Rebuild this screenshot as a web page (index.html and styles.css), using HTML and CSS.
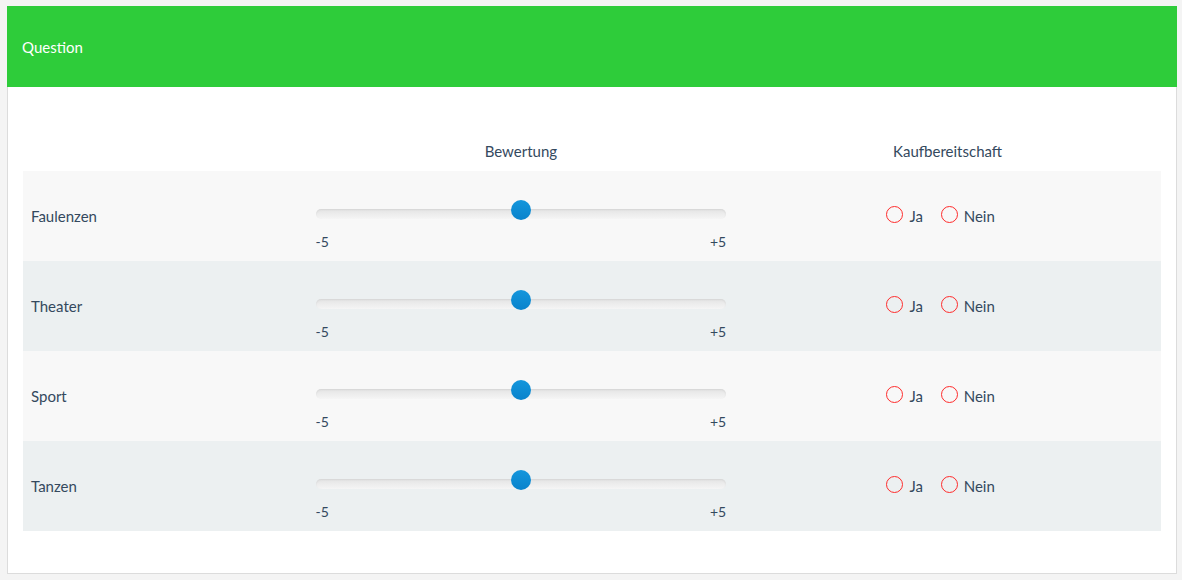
FILE: index.html
```html
<!DOCTYPE html>
<html lang="de">
<head>
    <meta charset="UTF-8">
    <meta name="viewport" content="width=device-width, initial-scale=1.0">
    <title>Question</title>
    <link rel="stylesheet" href="styles.css">
</head>
<body>
    <div class="panel">
        <div class="panel-heading">Question</div>
        <div class="panel-body">
            <table class="matrix">
                <thead>
                    <tr>
                        <th class="col-label"></th>
                        <th class="col-rating">Bewertung</th>
                        <th class="col-buy">Kaufbereitschaft</th>
                    </tr>
                </thead>
                <tbody>
                    <tr>
                        <td class="item">Faulenzen</td>
                        <td class="rating">
                            <div class="slider"><div class="slider-track"></div><div class="slider-thumb"></div></div>
                            <div class="slider-labels"><span>-5</span><span>+5</span></div>
                        </td>
                        <td class="buy">
                            <label class="radio"><input type="radio" name="q1"> Ja</label>
                            <label class="radio"><input type="radio" name="q1"> Nein</label>
                        </td>
                    </tr>
                    <tr>
                        <td class="item">Theater</td>
                        <td class="rating">
                            <div class="slider"><div class="slider-track"></div><div class="slider-thumb"></div></div>
                            <div class="slider-labels"><span>-5</span><span>+5</span></div>
                        </td>
                        <td class="buy">
                            <label class="radio"><input type="radio" name="q2"> Ja</label>
                            <label class="radio"><input type="radio" name="q2"> Nein</label>
                        </td>
                    </tr>
                    <tr>
                        <td class="item">Sport</td>
                        <td class="rating">
                            <div class="slider"><div class="slider-track"></div><div class="slider-thumb"></div></div>
                            <div class="slider-labels"><span>-5</span><span>+5</span></div>
                        </td>
                        <td class="buy">
                            <label class="radio"><input type="radio" name="q3"> Ja</label>
                            <label class="radio"><input type="radio" name="q3"> Nein</label>
                        </td>
                    </tr>
                    <tr>
                        <td class="item">Tanzen</td>
                        <td class="rating">
                            <div class="slider"><div class="slider-track"></div><div class="slider-thumb"></div></div>
                            <div class="slider-labels"><span>-5</span><span>+5</span></div>
                        </td>
                        <td class="buy">
                            <label class="radio"><input type="radio" name="q4"> Ja</label>
                            <label class="radio"><input type="radio" name="q4"> Nein</label>
                        </td>
                    </tr>
                </tbody>
            </table>
        </div>
    </div>
</body>
</html>
```

FILE: styles.css
```css
body{
    background-color: #f4f4f4;
    color: #34495e;
    font-family: Lato, "Open Sans", sans-serif;
    font-size: 15px;
    margin: 0;
    padding: 6px 5px 6px 7px;
}
.panel{
    background-color: #fff;
    border: 1px solid #dcdcdc;
    border-top: none;
}
.panel-heading{
    background-color: #2ecc3a;
    color: #fff;
    height: 81px;
    display: flex;
    align-items: center;
    padding-left: 15px;
    margin-left: -1px;
    margin-right: -1px;
}
.panel-body{
    padding: 44px 15px 42px 15px;
}
.matrix{
    width: 100%;
    border-collapse: collapse;
    table-layout: fixed;
}
.matrix th{
    font-weight: normal;
    height: 40px;
    text-align: center;
    vertical-align: middle;
    padding: 0;
}
.col-label{
    width: 25%;
}
.col-rating, .col-buy{
    width: 37.5%;
}
.matrix tbody tr{
    height: 90px;
    background-color: #f8f8f8;
}
.matrix tbody tr:nth-child(even){
    background-color: #ecf0f1;
}
.item{
    padding: 0 8px;
    vertical-align: middle;
}
.rating{
    vertical-align: top;
    padding: 38px 8px 0 8px;
}
.slider{
    position: relative;
    height: 10px;
}
.slider-track{
    height: 10px;
    border-radius: 5px;
    background: linear-gradient(#e4e4e4, #f5f5f5);
    box-shadow: inset 0 1px 2px rgba(0, 0, 0, 0.07);
}
.slider-thumb{
    position: absolute;
    left: 50%;
    top: -9px;
    width: 20px;
    height: 20px;
    margin-left: -10px;
    border-radius: 50%;
    background: linear-gradient(#1496dc, #0a83cc);
}
.slider-labels{
    display: flex;
    justify-content: space-between;
    margin-top: 14px;
    line-height: 18px;
    font-size: 14px;
}
.buy{
    text-align: center;
    vertical-align: middle;
    padding: 0 14px 0 0;
}
.radio{
    display: inline-flex;
    align-items: center;
    margin: 0 7px;
    font-size: 15px;
    line-height: 20px;
    padding-top: 2px;
}
.radio input{
    appearance: none;
    -webkit-appearance: none;
    width: 17px;
    height: 17px;
    margin: 0 6px 0 0;
    border: 1.5px solid #ff2b2b;
    border-radius: 50%;
    background: transparent;
    position: relative;
    top: -2px;
}
```
